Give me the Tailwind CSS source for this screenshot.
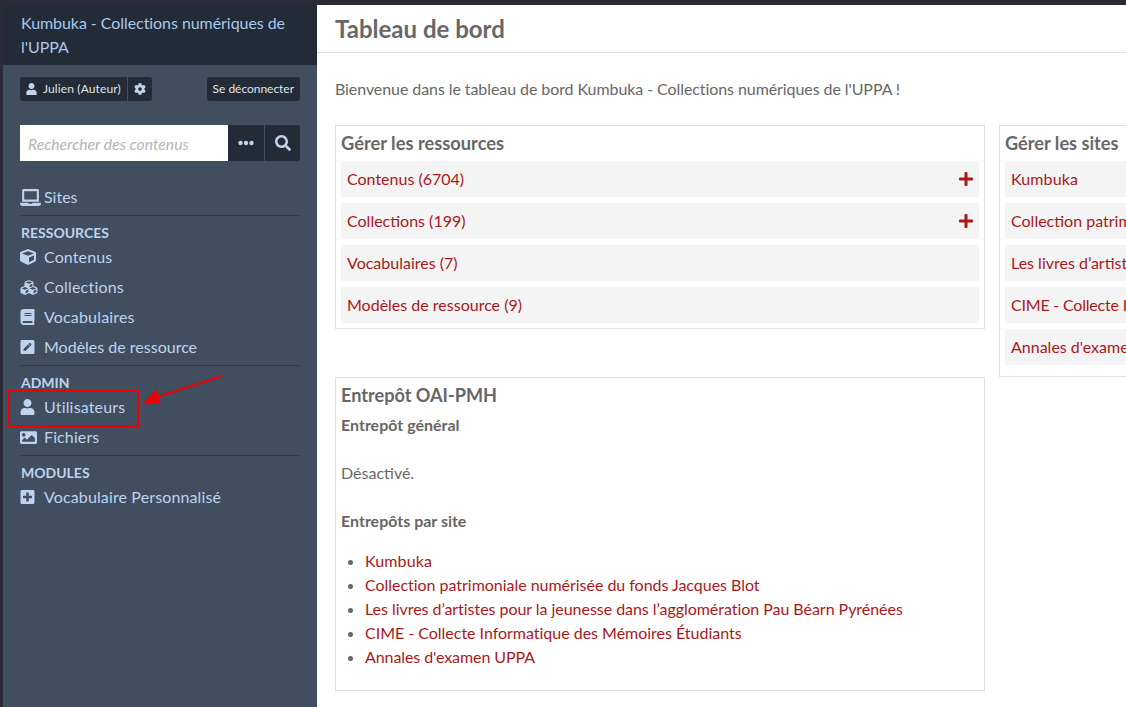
<!DOCTYPE html>
<html lang="fr">
<head>
    <meta charset="UTF-8">
    <title>Tableau de bord</title>
    <script src="https://cdn.jsdelivr.net/npm/@tailwindcss/browser@4"></script>
</head>
<body class="relative w-[1126px] h-[707px] overflow-hidden bg-white font-['Lato',sans-serif] text-[16px] text-[#676767]">
    <!-- Top strip of the browser window -->
    <div class="h-[5px] bg-[#2a2b36]"></div>

    <div class="flex h-[702px]">
        <div class="w-[3px] bg-[#2a2b36]"></div>

        <!-- Sidebar -->
        <aside class="w-[314px] shrink-0 bg-[#404e5f] text-[#bdd3ee]">
            <div class="h-[60px] bg-[#222b36] pl-[18px] pr-4 pt-[6px] text-[16px] leading-6 tracking-[-0.06px] text-[#a8c8ee]">
                Kumbuka - Collections numériques de l'UPPA
            </div>

            <div class="flex items-center justify-between pl-[17px] pr-[17px] pt-3">
                <div class="flex h-6 text-[12px] tracking-[0.13px] text-[#dfe5ec]">
                    <div class="flex items-center gap-[6px] rounded-l-[3px] bg-[#222b36] pl-[6px] pr-[6px]">
                        <svg class="h-[12px] w-[11px] fill-[#bdd3ee]" viewBox="0 0 448 512"><path d="M224 256c70.7 0 128-57.3 128-128S294.7 0 224 0 96 57.3 96 128s57.3 128 128 128zm89.6 32h-16.7c-22.2 10.2-46.9 16-72.9 16s-50.6-5.8-72.9-16h-16.7C60.2 288 0 348.2 0 422.4V464c0 26.5 21.5 48 48 48h352c26.5 0 48-21.5 48-48v-41.6c0-74.2-60.2-134.4-134.4-134.4z"/></svg>
                        Julien (Auteur)
                    </div>
                    <div class="ml-px flex w-6 items-center justify-center rounded-r-[3px] bg-[#222b36]">
                        <svg class="h-[12px] w-[12px] fill-[#bdd3ee]" viewBox="0 0 512 512"><path d="M487.4 315.7l-42.6-24.6c4.3-23.2 4.3-47 0-70.2l42.6-24.6c4.9-2.8 7.1-8.6 5.5-14-11.1-35.6-30-67.8-54.7-94.6-3.8-4.1-10-5.1-14.8-2.3L380.8 110c-17.9-15.4-38.5-27.3-60.8-35.1V25.8c0-5.6-3.9-10.5-9.4-11.7-36.7-8.2-74.3-7.8-109.2 0-5.5 1.2-9.4 6.1-9.4 11.7V75c-22.2 7.9-42.8 19.8-60.8 35.1L88.7 85.5c-4.9-2.8-11-1.9-14.8 2.3-24.7 26.7-43.6 58.9-54.7 94.6-1.7 5.4.6 11.2 5.5 14L67.3 221c-4.3 23.2-4.3 47 0 70.2l-42.6 24.6c-4.9 2.8-7.1 8.6-5.5 14 11.1 35.6 30 67.8 54.7 94.6 3.8 4.1 10 5.1 14.8 2.3l42.6-24.6c17.9 15.4 38.5 27.3 60.8 35.1v49.2c0 5.6 3.9 10.5 9.4 11.7 36.7 8.2 74.3 7.8 109.2 0 5.5-1.2 9.4-6.1 9.4-11.7v-49.2c22.2-7.9 42.8-19.8 60.8-35.1l42.6 24.6c4.9 2.8 11 1.9 14.8-2.3 24.7-26.7 43.6-58.9 54.7-94.6 1.5-5.5-.7-11.3-5.6-14.1zM256 336c-44.1 0-80-35.9-80-80s35.9-80 80-80 80 35.9 80 80-35.9 80-80 80z"/></svg>
                    </div>
                </div>
                <div class="flex h-6 items-center rounded-[3px] bg-[#222b36] px-[6px] text-[12px] tracking-[-0.03px] text-[#dfe5ec]">Se déconnecter</div>
            </div>

            <div class="mx-[17px] mt-6 flex h-9">
                <div class="flex w-[208px] items-center bg-white pl-2 pt-1 text-[15.7px] italic text-[#b5b5b5]">Rechercher des contenus</div>
                <div class="flex w-9 items-center justify-center bg-[#222b36]">
                    <svg class="h-[16px] w-[16px] fill-[#bdd3ee]" viewBox="0 0 16 16"><circle cx="2.5" cy="8" r="2.2"/><circle cx="8" cy="8" r="2.2"/><circle cx="13.5" cy="8" r="2.2"/></svg>
                </div>
                <div class="ml-px flex flex-1 items-center justify-center rounded-r-[3px] bg-[#222b36]">
                    <svg class="h-[16px] w-[16px] fill-[#bdd3ee]" viewBox="0 0 512 512"><path d="M505 442.7L405.3 343c-4.5-4.5-10.6-7-17-7H372c27.6-35.3 44-79.7 44-128C416 93.1 322.9 0 208 0S0 93.1 0 208s93.1 208 208 208c48.3 0 92.7-16.4 128-44v16.3c0 6.4 2.5 12.5 7 17l99.7 99.7c9.4 9.4 24.6 9.4 33.9 0l28.3-28.3c9.4-9.4 9.4-24.6.1-34zM208 336c-70.7 0-128-57.2-128-128 0-70.7 57.2-128 128-128 70.7 0 128 57.2 128 128 0 70.7-57.2 128-128 128z"/></svg>
                </div>
            </div>

            <nav class="mx-[17px] mt-[21px]">
                <a class="flex h-[30px] items-center gap-[3px]">
                    <svg class="h-[17px] w-[21px] fill-[#bdd3ee]" viewBox="0 0 640 512"><path d="M624 416H381.54c-.74 19.81-14.71 32-32.74 32H288c-18.69 0-33.02-17.47-32.77-32H16c-8.8 0-16 7.2-16 16v16c0 35.2 28.8 64 64 64h512c35.2 0 64-28.8 64-64v-16c0-8.8-7.2-16-16-16zM576 48c0-26.4-21.6-48-48-48H112C85.6 0 64 21.6 64 48v336h512V48zm-64 272H128V64h384v256z"/></svg>
                    <span>Sites</span>
                </a>
                <div class="mt-[3px] border-t border-[#2f3a48] pl-px pt-2 text-[14px] font-bold leading-[18px]">RESSOURCES</div>
                <a class="flex h-[30px] items-center gap-2 tracking-[0.12px]">
                    <svg class="h-4 w-[16px] fill-[#bdd3ee]" viewBox="0 0 512 512"><path d="M239.1 6.3l-208 78c-18.7 7-31.1 25-31.1 45v225.1c0 18.2 10.3 34.8 26.5 42.9l208 104c13.5 6.8 29.4 6.8 42.9 0l208-104c16.3-8.1 26.5-24.8 26.5-42.9V129.3c0-20-12.4-37.9-31.1-44.9l-208-78C262 2.2 250 2.2 239.1 6.3zM256 68.4l192 72v1.1l-192 78-192-78v-1.1l192-72zm32 356V275.5l160-65v133.9l-160 80z"/></svg>
                    Contenus
                </a>
                <a class="flex h-[30px] items-center gap-[6px] tracking-[0.2px]">
                    <svg class="h-[17px] w-[18px] fill-[#bdd3ee]" viewBox="0 0 512 512"><path d="M488.6 250.2L392 214V105.5c0-15-9.3-28.4-23.4-33.7l-100-37.5c-8.1-3.1-17.1-3.1-25.3 0l-100 37.5c-14.1 5.3-23.4 18.7-23.4 33.7V214l-96.6 36.2C9.3 255.5 0 268.9 0 283.9V394c0 13.6 7.7 26.1 19.9 32.2l100 50c10.1 5.1 22.1 5.1 32.2 0l103.9-52 103.9 52c10.1 5.1 22.1 5.1 32.2 0l100-50c12.2-6.1 19.9-18.6 19.9-32.2V283.9c0-15-9.3-28.4-23.4-33.7zM358 214.8l-85 31.9v-68.2l85-37v73.3zM154 104.1l102-38.2 102 38.2v.6l-102 41.4-102-41.4v-.6zm84 291.1l-85 42.5v-79.1l85-38.8v75.4zm0-112l-102 41.4-102-41.4v-.6l102-38.2 102 38.2v.6zm240 112l-85 42.5v-79.1l85-38.8v75.4zm0-112l-102 41.4-102-41.4v-.6l102-38.2 102 38.2v.6z"/></svg>
                    Collections
                </a>
                <a class="flex h-[30px] items-center gap-[9px] tracking-[0.17px]">
                    <svg class="h-4 w-[15px] fill-[#bdd3ee]" viewBox="0 0 448 512"><path d="M448 360V24c0-13.3-10.7-24-24-24H96C43 0 0 43 0 96v320c0 53 43 96 96 96h328c13.3 0 24-10.7 24-24v-16c0-7.5-3.5-14.3-8.9-18.7-4.2-15.4-4.2-59.3 0-74.7 5.4-4.3 8.9-11.1 8.9-18.6zM128 134c0-3.3 2.7-6 6-6h212c3.3 0 6 2.7 6 6v20c0 3.3-2.7 6-6 6H134c-3.3 0-6-2.7-6-6v-20zm0 64c0-3.3 2.7-6 6-6h212c3.3 0 6 2.7 6 6v20c0 3.3-2.7 6-6 6H134c-3.3 0-6-2.7-6-6v-20zm253.4 250H96c-17.7 0-32-14.3-32-32 0-17.6 14.4-32 32-32h285.4c-1.9 17.1-1.9 46.9 0 64z"/></svg>
                    Vocabulaires
                </a>
                <a class="flex h-[30px] items-center gap-[9px]">
                    <svg class="h-4 w-[15px] fill-[#bdd3ee]" viewBox="0 0 448 512"><path d="M400 480H48c-26.5 0-48-21.5-48-48V80c0-26.5 21.5-48 48-48h352c26.5 0 48 21.5 48 48v352c0 26.5-21.5 48-48 48zM238.1 177.9L102.4 313.6l-6.3 57.1c-.8 7.6 5.6 14.1 13.3 13.3l57.1-6.3L302.2 242c2.3-2.3 2.3-6.1 0-8.5L246.7 178c-2.5-2.4-6.3-2.4-8.6-.1zM345 165.1L314.9 135c-9.4-9.4-24.6-9.4-33.9 0l-23.1 23.1c-2.3 2.3-2.3 6.1 0 8.5l55.5 55.5c2.3 2.3 6.1 2.3 8.5 0L345 199c9.3-9.3 9.3-24.5 0-33.9z"/></svg>
                    Modèles de ressource
                </a>
                <div class="mt-[3px] border-t border-[#2f3a48] pl-px pt-2 text-[14px] font-bold leading-[18px]">ADMIN</div>
                <a class="flex h-[30px] items-center gap-[9px] tracking-[0.17px]">
                    <svg class="h-4 w-[15px] fill-[#bdd3ee]" viewBox="0 0 448 512"><path d="M224 256c70.7 0 128-57.3 128-128S294.7 0 224 0 96 57.3 96 128s57.3 128 128 128zm89.6 32h-16.7c-22.2 10.2-46.9 16-72.9 16s-50.6-5.8-72.9-16h-16.7C60.2 288 0 348.2 0 422.4V464c0 26.5 21.5 48 48 48h352c26.5 0 48-21.5 48-48v-41.6c0-74.2-60.2-134.4-134.4-134.4z"/></svg>
                    Utilisateurs
                </a>
                <a class="flex h-[30px] items-center gap-[7px] tracking-[0.12px]">
                    <svg class="h-[17px] w-[17px] fill-[#bdd3ee]" viewBox="0 0 512 512"><path d="M464 448H48c-26.51 0-48-21.49-48-48V112c0-26.51 21.49-48 48-48h416c26.51 0 48 21.49 48 48v288c0 26.51-21.49 48-48 48zM112 120c-30.928 0-56 25.072-56 56s25.072 56 56 56 56-25.072 56-56-25.072-56-56-56zM64 384h384V272l-87.515-87.515c-4.686-4.686-12.284-4.686-16.971 0L208 320l-55.515-55.515c-4.686-4.686-12.284-4.686-16.971 0L64 336v48z"/></svg>
                    Fichiers
                </a>
                <div class="mt-[3px] border-t border-[#2f3a48] pl-px pt-2 text-[14px] font-bold leading-[18px]">MODULES</div>
                <a class="flex h-[30px] items-center gap-[9px] tracking-[0.13px]">
                    <svg class="h-4 w-[15px] fill-[#bdd3ee]" viewBox="0 0 448 512"><path d="M400 32H48C21.5 32 0 53.5 0 80v352c0 26.5 21.5 48 48 48h352c26.5 0 48-21.5 48-48V80c0-26.5-21.5-48-48-48zm-32 252c0 6.6-5.4 12-12 12h-92v92c0 6.6-5.4 12-12 12h-56c-6.6 0-12-5.4-12-12v-92H92c-6.6 0-12-5.4-12-12v-56c0-6.6 5.4-12 12-12h92v-92c0-6.6 5.4-12 12-12h56c6.6 0 12 5.4 12 12v92h92c6.6 0 12 5.4 12 12v56z"/></svg>
                    Vocabulaire Personnalisé
                </a>
            </nav>
        </aside>

        <!-- Main content -->
        <main class="min-w-0 flex-1 overflow-hidden">
            <div class="h-[48px] border-b border-[#dfdfdf] pl-[18px] text-[24px] font-bold leading-[48px]">Tableau de bord</div>
            <p class="ml-[18px] mt-6 leading-6 tracking-[-0.08px]">Bienvenue dans le tableau de bord Kumbuka - Collections numériques de l'UPPA !</p>

            <div class="ml-[18px] mt-6 flex w-[900px] items-start gap-[14px]">
                <div class="flex w-[650px] shrink-0 flex-col gap-12">
                    <section class="border border-[#dfdfdf] px-[5px] pb-[5px]">
                        <h2 class="h-[35px] text-[18.3px] font-bold leading-[34px]">Gérer les ressources</h2>
                        <div class="flex flex-col gap-[6px] text-[#a91919]">
                            <div class="flex h-9 items-center justify-between bg-[#f4f4f4] pl-[6px] pr-[6px]">
                                Contenus (6704)
                                <svg class="h-[14px] w-[14px] fill-[#a91919]" viewBox="0 32 448 448"><path d="M416 208H272V64c0-17.67-14.33-32-32-32h-32c-17.67 0-32 14.33-32 32v144H32c-17.67 0-32 14.33-32 32v32c0 17.67 14.33 32 32 32h144v144c0 17.67 14.33 32 32 32h32c17.67 0 32-14.33 32-32V304h144c17.67 0 32-14.33 32-32v-32c0-17.67-14.33-32-32-32z"/></svg>
                            </div>
                            <div class="flex h-9 items-center justify-between bg-[#f4f4f4] pl-[6px] pr-[6px]">
                                Collections (199)
                                <svg class="h-[14px] w-[14px] fill-[#a91919]" viewBox="0 32 448 448"><path d="M416 208H272V64c0-17.67-14.33-32-32-32h-32c-17.67 0-32 14.33-32 32v144H32c-17.67 0-32 14.33-32 32v32c0 17.67 14.33 32 32 32h144v144c0 17.67 14.33 32 32 32h32c17.67 0 32-14.33 32-32V304h144c17.67 0 32-14.33 32-32v-32c0-17.67-14.33-32-32-32z"/></svg>
                            </div>
                            <div class="flex h-9 items-center bg-[#f4f4f4] pl-[6px]">Vocabulaires (7)</div>
                            <div class="flex h-9 items-center bg-[#f4f4f4] pl-[6px]">Modèles de ressource (9)</div>
                        </div>
                    </section>

                    <section class="h-[314px] border border-[#dfdfdf] px-[5px]">
                        <h2 class="h-[35px] text-[18.1px] font-bold leading-[34px]">Entrepôt OAI-PMH</h2>
                        <p class="font-bold leading-6">Entrepôt général</p>
                        <p class="mt-6 leading-6">Désactivé.</p>
                        <p class="mt-6 font-bold leading-6">Entrepôts par site</p>
                        <ul class="ml-6 mt-4 list-disc text-[#a91919] marker:text-[#676767]">
                            <li class="leading-6 tracking-[0.1px]">Kumbuka</li>
                            <li class="leading-6 tracking-[-0.03px]">Collection patrimoniale numérisée du fonds Jacques Blot</li>
                            <li class="leading-6 tracking-[-0.04px]">Les livres d’artistes pour la jeunesse dans l’agglomération Pau Béarn Pyrénées</li>
                            <li class="leading-6 tracking-[-0.02px]">CIME - Collecte Informatique des Mémoires Étudiants</li>
                            <li class="leading-6 tracking-[-0.08px]">Annales d'examen UPPA</li>
                        </ul>
                    </section>
                </div>

                <section class="h-[252px] w-[400px] shrink-0 border border-[#dfdfdf] px-[5px]">
                    <h2 class="h-[35px] text-[18.2px] font-bold leading-[34px]">Gérer les sites</h2>
                    <div class="flex flex-col gap-[6px] text-[#a91919]">
                        <div class="flex h-9 items-center whitespace-nowrap bg-[#f4f4f4] pl-[6px] tracking-[0.1px]">Kumbuka</div>
                        <div class="flex h-9 items-center whitespace-nowrap bg-[#f4f4f4] pl-[6px]">Collection patrimoniale numérisée du fonds Jacques Blot</div>
                        <div class="flex h-9 items-center whitespace-nowrap bg-[#f4f4f4] pl-[6px]">Les livres d’artistes pour la jeunesse</div>
                        <div class="flex h-9 items-center whitespace-nowrap bg-[#f4f4f4] pl-[6px] tracking-[-0.2px]">CIME - Collecte Informatique des Mémoires</div>
                        <div class="flex h-9 items-center whitespace-nowrap bg-[#f4f4f4] pl-[6px]">Annales d'examen UPPA</div>
                    </div>
                </section>
            </div>
        </main>
    </div>

    <!-- Red annotation over the sidebar -->
    <div class="absolute left-[8px] top-[390px] h-[37px] w-[131px] border-2 border-[#ee0000]"></div>
    <svg class="absolute left-[140px] top-[370px] h-[40px] w-[90px]" viewBox="0 0 90 40">
        <path d="M82 6L14 28" fill="none" stroke="#ee0000" stroke-width="2"/>
        <path d="M3 33L17 19L20 33Z" fill="#ee0000"/>
    </svg>
</body>
</html>
